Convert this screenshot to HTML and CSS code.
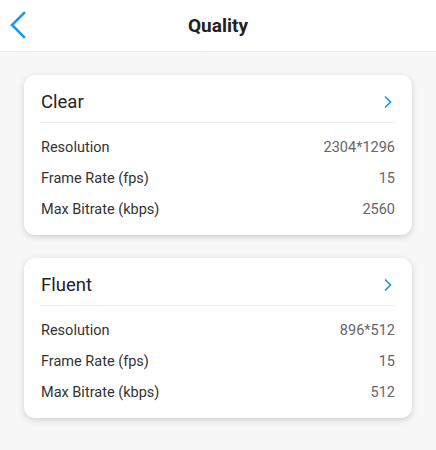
FILE: index.html
```html
<!DOCTYPE html>
<html>
<head>
<meta charset="utf-8">
<link rel="stylesheet" href="styles.css">
</head>
<body>
<div class="header">
  <svg class="back" width="20" height="30" viewBox="0 0 20 30"><path d="M15 3 L3 15 L15 27" fill="none" stroke="#1a9be6" stroke-width="2.6" stroke-linecap="square"/></svg>
  <div class="title">Quality</div>
</div>
<div class="content">
  <div class="card">
    <div class="card-head">
      <span class="name">Clear</span>
      <svg class="chev" width="10" height="14" viewBox="0 0 10 14"><path d="M2 1.5 L7.5 7 L2 12.5" fill="none" stroke="#1a9be6" stroke-width="1.7"/></svg>
    </div>
    <div class="rows">
      <div class="row"><span>Resolution</span><span class="val">2304*1296</span></div>
      <div class="row"><span>Frame Rate (fps)</span><span class="val">15</span></div>
      <div class="row"><span>Max Bitrate (kbps)</span><span class="val">2560</span></div>
    </div>
  </div>
  <div class="card">
    <div class="card-head">
      <span class="name">Fluent</span>
      <svg class="chev" width="10" height="14" viewBox="0 0 10 14"><path d="M2 1.5 L7.5 7 L2 12.5" fill="none" stroke="#1a9be6" stroke-width="1.7"/></svg>
    </div>
    <div class="rows">
      <div class="row"><span>Resolution</span><span class="val">896*512</span></div>
      <div class="row"><span>Frame Rate (fps)</span><span class="val">15</span></div>
      <div class="row"><span>Max Bitrate (kbps)</span><span class="val">512</span></div>
    </div>
  </div>
</div>
</body>
</html>
```
FILE: styles.css
```css
html, body {
  margin: 0;
  padding: 0;
  background: #f7f7f7;
  font-family: Roboto, "Noto Sans", sans-serif;
  height: 450px;
  overflow: hidden;
}
.header {
  position: relative;
  height: 51px;
  background: #fff;
  border-bottom: 1px solid #ececec;
  display: flex;
  align-items: center;
  justify-content: center;
}
.back {
  position: absolute;
  left: 9px;
  top: 10px;
}
.title {
  font-size: 19px;
  font-weight: 700;
  color: #222;
}
.content {
  padding: 23px 24px;
  display: flex;
  flex-direction: column;
  gap: 23px;
}
.card {
  background: #fff;
  border-radius: 11px;
  box-shadow: 0 2px 6px rgba(0,0,0,0.16);
  height: 160px;
  box-sizing: border-box;
}
.card-head {
  margin: 0 16px;
  padding: 15px 1px 8px 1px;
  border-bottom: 1.5px solid #ececec;
  display: flex;
  align-items: center;
  justify-content: space-between;
  height: 24px;
}
.name {
  font-size: 18.5px;
  color: #222;
  line-height: 24px;
}
.chev {
  margin-right: 2px;
}
.rows {
  padding: 9px 17px 0 17px;
}
.row {
  display: flex;
  justify-content: space-between;
  align-items: center;
  height: 31px;
  font-size: 14.5px;
  color: #333;
}
.val {
  color: #666;
}
```
